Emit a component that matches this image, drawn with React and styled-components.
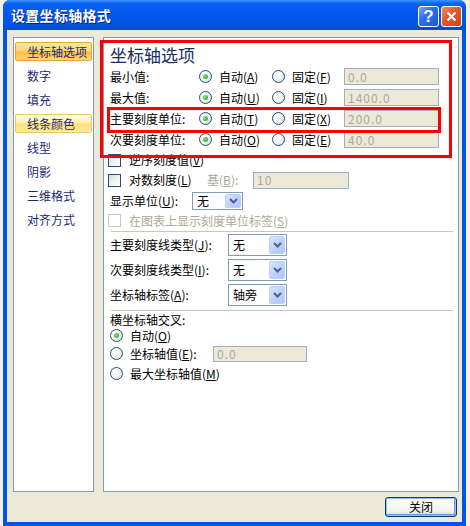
import React from 'react';
import styled, { createGlobalStyle, css } from 'styled-components';

const GlobalStyle = createGlobalStyle`
	html, body {
		margin: 0;
		padding: 0;
		background: #f1f1f1;
		overflow: hidden;
	}
	body {
		font-family: 'Noto Sans CJK SC', 'Liberation Sans', sans-serif;
		font-size: 12px;
		color: #000;
	}
`;

const Window = styled.div`
	margin-left: 3px;
	width: 463px;
	height: 526px;
	display: flex;
	flex-direction: column;
	border-radius: 7px 7px 0 0;
	overflow: hidden;
	background: #0055e5;
`;

const TitleBar = styled.div`
	height: 30px;
	flex: none;
	display: flex;
	align-items: center;
	justify-content: space-between;
	padding: 0 4px 0 8px;
	box-sizing: border-box;
	background: linear-gradient(
		to bottom,
		#3d95ff 0%,
		#0a62f0 12%,
		#0058ee 40%,
		#0055e6 80%,
		#0048d8 100%
	);
`;

const Title = styled.span`
	font-size: 14px;
	font-weight: 700;
	color: #fff;
	letter-spacing: 0.3px;
	text-shadow: 1px 1px 0 #0a1e82;
	line-height: 30px;
`;

const CaptionButtons = styled.div`
	display: flex;
	gap: 2px;
	margin-top: 3px;
`;

const CaptionButton = styled.div`
	width: 21px;
	height: 21px;
	box-sizing: border-box;
	border: 1px solid #fff;
	border-radius: 3px;
	display: flex;
	align-items: center;
	justify-content: center;
	color: #fff;
	font-family: 'Liberation Sans', sans-serif;
	font-weight: 700;
	font-size: 17px;
	${({ $variant }) =>
		$variant === 'close'
			? css`
					background: linear-gradient(135deg, #f0906c 0%, #e25a30 40%, #cc4418 100%);
			  `
			: css`
					background: linear-gradient(135deg, #7fa8f8 0%, #2f6df0 40%, #1c55d8 100%);
			  `}
`;

const Body = styled.div`
	flex: 1;
	display: flex;
	flex-direction: column;
	background: #ece9d8;
	margin: 0 4px 4px 4px;
	padding: 7px 3px 0 6px;
	box-sizing: border-box;
`;

const Panes = styled.div`
	height: 455px;
	display: flex;
	gap: 9px;
`;

const NavList = styled.ul`
	list-style: none;
	margin: 0;
	width: 81px;
	box-sizing: border-box;
	border: 1px solid #7f9db9;
	background: #fff;
	padding: 1px 0 0;
`;

const NavItem = styled.li`
	height: 24px;
	display: flex;
	align-items: center;
	padding: 0 1px;
`;

const NavLabel = styled.span`
	flex: 1;
	height: 19px;
	box-sizing: border-box;
	padding-left: 11px;
	line-height: 17px;
	color: #1b2a78;
	font-size: 12px;
	border: 1px solid transparent;
	border-radius: 2px;
	${({ $state }) =>
		$state === 'selected' &&
		css`
			border-color: #e6a43c;
			background: linear-gradient(
				to bottom,
				#ffe7a8 0%,
				#ffd47a 45%,
				#ffbf3a 55%,
				#ffd680 100%
			);
		`}
	${({ $state }) =>
		$state === 'hover' &&
		css`
			border-color: #f0c76a;
			background: linear-gradient(
				to bottom,
				#fffbe0 0%,
				#ffefb0 45%,
				#ffdf7c 55%,
				#ffeaa0 100%
			);
		`}
`;

const OptionsPanel = styled.section`
	position: relative;
	flex: 1;
	box-sizing: border-box;
	border: 1px solid #7f9db9;
	background: #fff;
	padding: 6px 0 0 6px;
`;

const Heading = styled.h2`
	margin: 0;
	height: 22px;
	line-height: 22px;
	font-size: 17px;
	font-weight: 400;
	color: #1a2f66;
`;

const Row = styled.div`
	height: ${({ $h }) => $h || 21}px;
	display: flex;
	align-items: center;
	white-space: nowrap;
	line-height: 14px;
	color: ${({ $disabled }) => ($disabled ? '#aca899' : '#000')};
`;

const RowLabel = styled.span`
	width: ${({ $w }) => $w}px;
	flex: none;
	color: ${({ $muted }) => ($muted ? '#aca899' : 'inherit')};
`;

const Option = styled.label`
	width: ${({ $w }) => $w}px;
	flex: none;
	display: flex;
	align-items: center;
	gap: 7px;
`;

const Radio = styled.span`
	width: 13px;
	height: 13px;
	flex: none;
	box-sizing: border-box;
	border-radius: 50%;
	border: 1px solid #1c5180;
	background: radial-gradient(circle at 35% 35%, #fff 0%, #f4f4f0 45%, #d6d5cc 100%);
	display: flex;
	align-items: center;
	justify-content: center;
	&::after {
		content: '';
		width: 5px;
		height: 5px;
		border-radius: 50%;
		background: radial-gradient(circle at 35% 35%, #7ee07a, #21a121);
		display: ${({ $checked }) => ($checked ? 'block' : 'none')};
	}
`;

const Checkbox = styled.span`
	width: 13px;
	height: 13px;
	flex: none;
	box-sizing: border-box;
	margin: 0 8px 0 -2px;
	border: 1px solid ${({ $disabled }) => ($disabled ? '#cac8bb' : '#1c5180')};
	background: ${({ $disabled }) =>
		$disabled ? '#fff' : 'linear-gradient(135deg, #dcdcd7 0%, #f6f6f3 60%, #fff 100%)'};
`;

const TextBox = styled.span`
	width: ${({ $w }) => $w}px;
	height: ${({ $h }) => $h || 17}px;
	flex: none;
	box-sizing: border-box;
	border: 1px solid #a0aebd;
	background: #ece9d8;
	color: #aca899;
	padding-left: 3px;
	display: flex;
	align-items: center;
	letter-spacing: 1px;
`;

const Select = styled.span`
	width: ${({ $w }) => $w}px;
	height: ${({ $h }) => $h}px;
	flex: none;
	box-sizing: border-box;
	border: 1px solid #7f9db9;
	background: #fff;
	display: flex;
	align-items: stretch;
	padding: 1px;
`;

const SelectValue = styled.span`
	flex: 1;
	padding-left: 3px;
	display: flex;
	align-items: center;
`;

const SelectButton = styled.span`
	width: 16px;
	box-sizing: border-box;
	border: 1px solid #bcd0fa;
	border-radius: 2px;
	background: linear-gradient(135deg, #d8e4fe 0%, #bccffb 60%, #b0c5f7 100%);
	display: flex;
	align-items: center;
	justify-content: center;
`;

const Divider = styled.hr`
	margin: ${({ $mt }) => $mt}px 5px 0 1px;
	border: 0;
	border-top: 1px solid #c9c7ba;
	height: 0;
`;

const Accel = styled.u`
	text-underline-offset: 1px;
`;

const Highlight = styled.div`
	position: absolute;
	border: 3px solid #f00;
	pointer-events: none;
	left: ${({ $x }) => $x}px;
	top: ${({ $y }) => $y}px;
	width: ${({ $w }) => $w}px;
	height: ${({ $h }) => $h}px;
	box-sizing: border-box;
`;

const Footer = styled.div`
	display: flex;
	justify-content: flex-end;
	padding: 5px 2px 0 0;
`;

const PushButton = styled.button`
	width: 72px;
	height: 20px;
	box-sizing: border-box;
	border: 1px solid #003c74;
	border-radius: 3px;
	background: linear-gradient(to bottom, #fff 0%, #f4f3ee 70%, #dcd8c8 100%);
	box-shadow: inset 0 0 0 1px #9fbcf0, inset -1px -1px 0 1px #6d95e0;
	font-family: 'Noto Sans CJK SC', sans-serif;
	font-size: 12px;
	color: #000;
	padding: 0;
	line-height: 16px;
`;

const Chevron = () => (
	<svg width='9' height='6' viewBox='0 0 9 6'>
		<path d='M1 1 L4.5 4.5 L8 1' stroke='#4d6185' strokeWidth='2' fill='none' />
	</svg>
);

const navItems = [
	{ label: '坐标轴选项', state: 'selected' },
	{ label: '数字' },
	{ label: '填充' },
	{ label: '线条颜色', state: 'hover' },
	{ label: '线型' },
	{ label: '阴影' },
	{ label: '三维格式' },
	{ label: '对齐方式' },
];

const axisRows = [
	{ label: '最小值:', auto: 'A', fixed: 'F', value: '0.0' },
	{ label: '最大值:', auto: 'U', fixed: 'I', value: '1400.0' },
	{ label: '主要刻度单位:', auto: 'T', fixed: 'X', value: '200.0' },
	{ label: '次要刻度单位:', auto: 'O', fixed: 'E', value: '40.0' },
];

const tickRows = [
	{ label: '主要刻度线类型', key: 'J', value: '无' },
	{ label: '次要刻度线类型', key: 'I', value: '无' },
	{ label: '坐标轴标签', key: 'A', value: '轴旁' },
];

const Dropdown = ({ w, h, value }) => (
	<Select $w={w} $h={h}>
		<SelectValue>{value}</SelectValue>
		<SelectButton>
			<Chevron />
		</SelectButton>
	</Select>
);

const App = () => {
	return (
		<>
			<GlobalStyle />
			<Window>
				<TitleBar>
					<Title>设置坐标轴格式</Title>
					<CaptionButtons>
						<CaptionButton $variant='help'>?</CaptionButton>
						<CaptionButton $variant='close'>
							<svg width='11' height='11' viewBox='0 0 11 11'>
								<path d='M1.5 1.5 L9.5 9.5 M9.5 1.5 L1.5 9.5' stroke='#fff' strokeWidth='2.2' />
							</svg>
						</CaptionButton>
					</CaptionButtons>
				</TitleBar>
				<Body>
					<Panes>
						<NavList>
							{navItems.map((item) => (
								<NavItem key={item.label}>
									<NavLabel $state={item.state}>{item.label}</NavLabel>
								</NavItem>
							))}
						</NavList>
						<OptionsPanel>
							<Heading>坐标轴选项</Heading>
							{axisRows.map((row) => (
								<Row key={row.label}>
									<RowLabel $w={89}>{row.label}</RowLabel>
									<Option $w={73}>
										<Radio $checked />
										<span>
											自动(<Accel>{row.auto}</Accel>)
										</span>
									</Option>
									<Option $w={72}>
										<Radio />
										<span>
											固定(<Accel>{row.fixed}</Accel>)
										</span>
									</Option>
									<TextBox $w={95}>{row.value}</TextBox>
								</Row>
							))}
							<Row $h={20}>
								<Checkbox />
								<span>
									逆序刻度值(<Accel>V</Accel>)
								</span>
							</Row>
							<Row $h={20}>
								<Checkbox />
								<RowLabel $w={78}>
									对数刻度(<Accel>L</Accel>)
								</RowLabel>
								<RowLabel $w={46} $muted>
									基(<Accel>B</Accel>):
								</RowLabel>
								<TextBox $w={96}>10</TextBox>
							</Row>
							<Row $h={21}>
								<RowLabel $w={82}>
									显示单位(<Accel>U</Accel>):
								</RowLabel>
								<Dropdown w={51} h={18} value='无' />
							</Row>
							<Row $h={19} $disabled>
								<Checkbox $disabled />
								<span>
									在图表上显示刻度单位标签(<Accel>S</Accel>)
								</span>
							</Row>
							<Divider $mt={1} />
							{tickRows.map((row) => (
								<Row key={row.label} $h={25}>
									<RowLabel $w={118}>
										{row.label}(<Accel>{row.key}</Accel>):
									</RowLabel>
									<Dropdown w={59} h={22} value={row.value} />
								</Row>
							))}
							<Divider $mt={3} />
							<Row $h={17}>横坐标轴交叉:</Row>
							<Row $h={15}>
								<Option $w={120}>
									<Radio $checked />
									<span>
										自动(<Accel>O</Accel>)
									</span>
								</Option>
							</Row>
							<Row $h={21}>
								<Option $w={103}>
									<Radio />
									<span>
										坐标轴值(<Accel>E</Accel>):
									</span>
								</Option>
								<TextBox $w={94} $h={16}>
									0.0
								</TextBox>
							</Row>
							<Row $h={19}>
								<Option $w={200}>
									<Radio />
									<span>
										最大坐标轴值(<Accel>M</Accel>)
									</span>
								</Option>
							</Row>
							<Highlight $x={-4} $y={2} $w={352} $h={118} />
							<Highlight $x={3} $y={69} $w={334} $h={26} />
						</OptionsPanel>
					</Panes>
					<Footer>
						<PushButton>关闭</PushButton>
					</Footer>
				</Body>
			</Window>
		</>
	);
};

export default App;
